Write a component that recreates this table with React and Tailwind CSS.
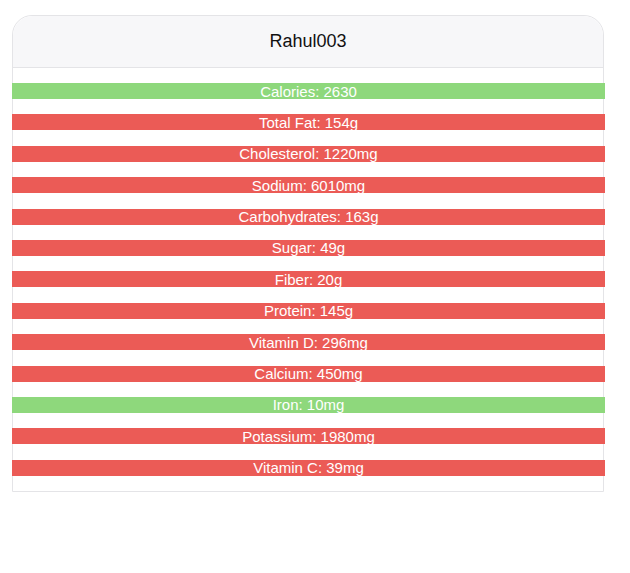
const items = [
  { label: "Calories: 2630", ok: true },
  { label: "Total Fat: 154g", ok: false },
  { label: "Cholesterol: 1220mg", ok: false },
  { label: "Sodium: 6010mg", ok: false },
  { label: "Carbohydrates: 163g", ok: false },
  { label: "Sugar: 49g", ok: false },
  { label: "Fiber: 20g", ok: false },
  { label: "Protein: 145g", ok: false },
  { label: "Vitamin D: 296mg", ok: false },
  { label: "Calcium: 450mg", ok: false },
  { label: "Iron: 10mg", ok: true },
  { label: "Potassium: 1980mg", ok: false },
  { label: "Vitamin C: 39mg", ok: false },
];

export default function App() {
  return (
    <div className="min-h-screen bg-white px-[12px] pt-[15px] font-[family-name:'Liberation_Sans',Arial,sans-serif]">
      <div className="w-[592px] rounded-t-[20px] border border-[#e4e4e7] bg-white">
        <div className="flex h-[52px] items-center justify-center rounded-t-[20px] border-b border-[#e4e4e7] bg-[#f7f7f9]">
          <h1 className="text-[18px] text-[#111]">Rahul003</h1>
        </div>
        <div className="flex flex-col gap-[15.4px] pb-[15px] pt-[15px]">
          {items.map((it) => (
            <div
              key={it.label}
              className={
                "-ml-px -mr-[2px] flex h-[16px] items-center justify-center text-[15px] leading-none text-white " +
                (it.ok ? "bg-[#8ed87c]" : "bg-[#eb5b56]")
              }
            >
              {it.label}
            </div>
          ))}
        </div>
      </div>
    </div>
  );
}
